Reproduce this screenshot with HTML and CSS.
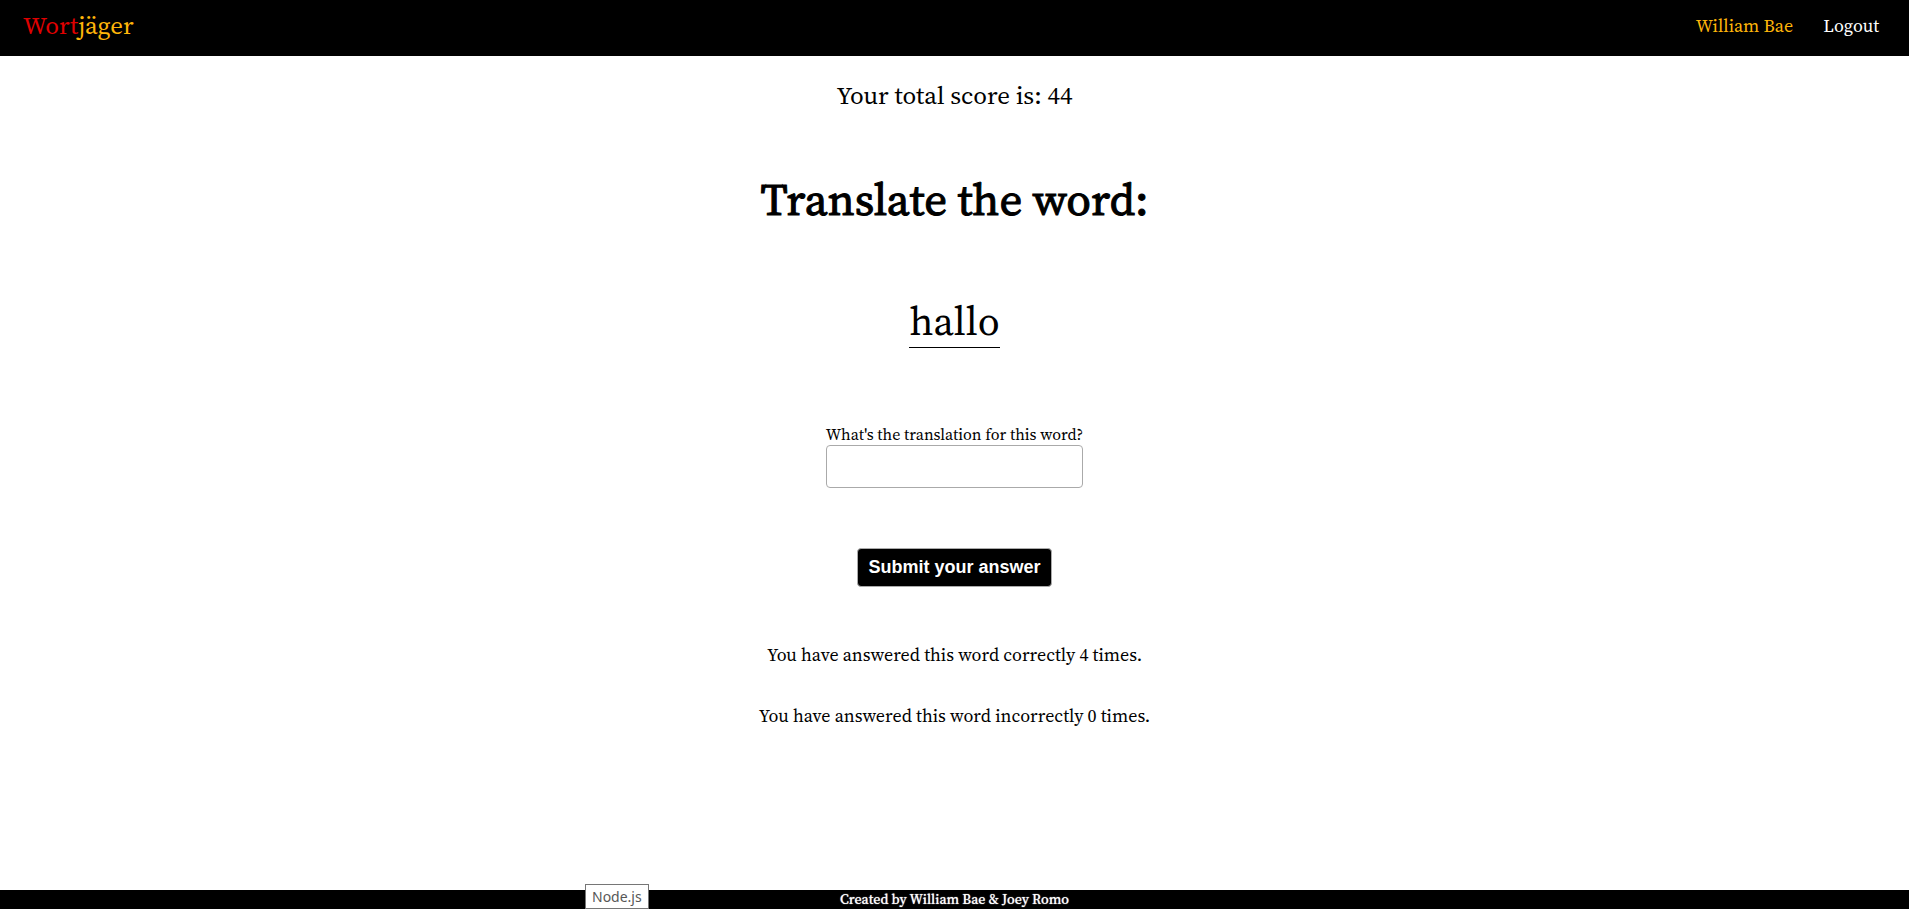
FILE: index.html
```html
<!DOCTYPE html>
<html lang="en">
<head>
<meta charset="utf-8">
<title>Wortjäger</title>
<link rel="stylesheet" href="styles.css">
</head>
<body>
<header class="header">
  <a class="logo" href="#"><span class="logo-red">Wort</span><span class="logo-gold">jäger</span></a>
  <nav class="nav">
    <span class="user">William Bae</span>
    <a class="logout" href="#">Logout</a>
  </nav>
</header>
<main class="main">
  <p class="score">Your total score is: 44</p>
  <h1 class="title">Translate the word:</h1>
  <p class="word">hallo</p>
  <form class="form">
    <label class="label" for="guess">What's the translation for this word?</label>
    <input class="input" id="guess" type="text">
    <button class="submit" type="button">Submit your answer</button>
  </form>
  <p class="stat">You have answered this word correctly 4 times.</p>
  <p class="stat">You have answered this word incorrectly 0 times.</p>
</main>
<footer class="footer">Created by William Bae &amp; Joey Romo</footer>
<div class="tip" role="tooltip">Node.js</div>
</body>
</html>
```
FILE: styles.css
```css
* { box-sizing: border-box; }
body {
  margin: 0;
  min-height: 100vh;
  display: flex;
  flex-direction: column;
  background: #fff;
  color: #000;
  font-family: "Source Serif Pro", "Source Serif 4", "Liberation Serif", serif;
}
p, h1 { margin: 0; }
a { text-decoration: none; }
.header {
  display: flex;
  justify-content: space-between;
  align-items: flex-start;
  padding: 8px 30px 12px 23px;
  background: #000;
}
.logo { font-size: 25px; line-height: 34px; }
.logo-red { color: #e00000; }
.logo-gold { color: #ffb60a; }
.nav { display: flex; gap: 30px; font-size: 18px; line-height: 36px; }
.user { color: #ffb60a; }
.logout { color: #fff; }
.main {
  flex: 1;
  display: flex;
  flex-direction: column;
  align-items: center;
}
.score { margin-top: 21px; font-size: 25px; line-height: 36px; }
.title {
  margin-top: 56px;
  font-size: 45px;
  font-weight: 400;
  line-height: 60px;
  -webkit-text-stroke: 1px #000;
}
.word {
  margin-top: 68px;
  padding-bottom: 2px;
  border-bottom: 1px solid #000;
  font-size: 40px;
  line-height: 48px;
}
.form {
  margin-top: 76px;
  display: flex;
  flex-direction: column;
  align-items: center;
}
.label { padding-bottom: 1px; font-size: 16px; line-height: 20px; }
.input {
  width: 100%;
  height: 43px;
  border: 1px solid #aaa;
  border-radius: 4px;
  padding: 8px;
  font-size: 18px;
}
.submit {
  margin-top: 60px;
  height: 39px;
  padding: 0 10px;
  border: 1px solid #aaa;
  border-radius: 4px;
  background: #000;
  color: #fff;
  font-family: "Liberation Sans", Arial, sans-serif;
  font-size: 18px;
  font-weight: bold;
}
.stat { margin-top: 56px; font-size: 18px; line-height: 24px; }
.stat + .stat { margin-top: 37px; }
.footer {
  background: #000;
  color: #fff;
  text-align: center;
  font-size: 14px;
  line-height: 19px;
  text-shadow: 0 0 1px #fff;
}
.tip {
  position: fixed;
  left: 585px;
  bottom: 0;
  padding: 0 6px;
  border: 1px solid #767676;
  background: #fff;
  color: #575757;
  font-family: "Noto Sans", sans-serif;
  font-size: 14px;
  line-height: 23px;
}
```
